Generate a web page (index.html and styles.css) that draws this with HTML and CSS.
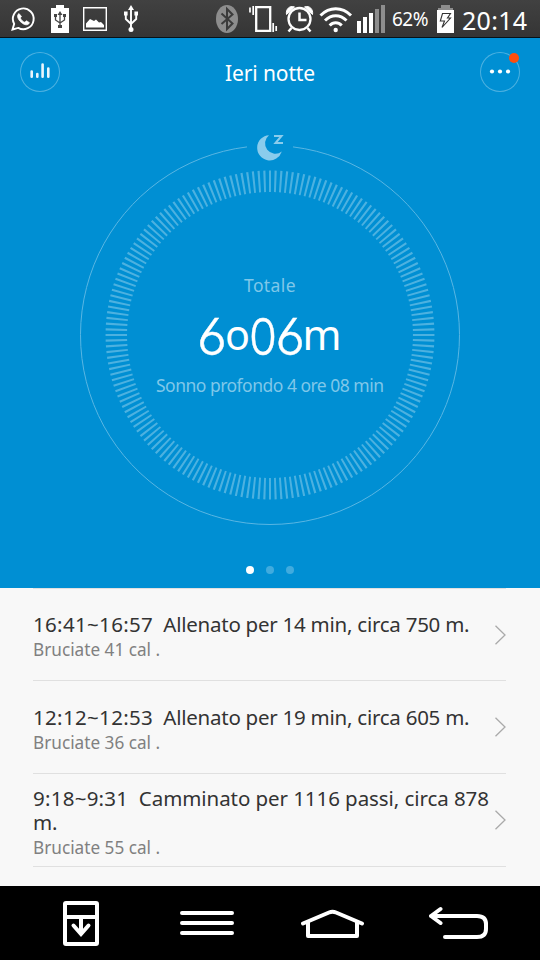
FILE: index.html
```html
<!DOCTYPE html>
<html lang="it">
<head>
<meta charset="utf-8">
<title>Ieri notte</title>
<link rel="stylesheet" href="styles.css">
</head>
<body>
<div class="screen">
  <div class="status">
    <svg class="status-icons" width="160" height="38" viewBox="0 0 160 38" fill="none" stroke="#fff">
      <path d="M12.500 29.500l1.700-5.600a10.400 10.400 0 1 1 4 4z" stroke-width="1.900"/>
      <path d="M19 13.500c-3 2-1 6 2 8.700s7 4 8.500.5l-3.100-2-1.500 1.600c-2-.7-3.700-2.400-4.600-4.400l1.200-1.400z" fill="#fff" stroke="#fff" stroke-width=".7"/>
      <path d="M56 5h8v3h5v25H51V8h5z" fill="#fff" stroke="none"/>
      <path d="M60 15v12M55.500 16v4l4.500 3 4.500-3v-4" stroke="#444" stroke-width="1.300"/>
      <path d="M60 11l2.500 4h-5z M58 25h4v3h-4z M54 14h3v3h-3z M63 14h3v3h-3z" fill="#444" stroke="none"/>
      <path d="M83.700 7.700h22.600v22.600H83.700z" stroke-width="1.400"/>
      <path d="M86 27.500v-4l4-4.500 4 2 2-1.500 3 3 2-.5 3 3v2.500z" fill="#fff" stroke="none"/>
      <path d="M131 9v20M125.800 14v5l5.200 5 5.200-5v-5" stroke-width="1.900"/>
      <path d="M131 5l3 5h-6z M124 11.500h3.600v4H124z M134.400 11.500h3.600v4h-3.600z" fill="#fff" stroke="none"/>
      <circle cx="131" cy="29.500" r="2.500" fill="#fff" stroke="none"/>
    </svg>
    <div class="status-right">
      <svg class="status-icons" width="174" height="38" viewBox="212 0 174 38" fill="none" stroke="#fff">
        <ellipse cx="227" cy="19" rx="11" ry="14" fill="#8d8d8d" stroke="none"/>
        <path d="M221.500 13.500l11 10-5.500 5.500V9l5.500 5.500-11 9.500" stroke="#3b3b3b" stroke-width="2"/>
        <path d="M256.200 7.200h14v23.600h-14z" stroke-width="2.300"/>
        <path d="M253.200 6v9M250 7.500v5M273.200 23v9M276.200 26v5" stroke-width="1.700"/>
        <circle cx="299.500" cy="19" r="11" stroke-width="2.300"/>
        <path d="M299.500 12.500V20h7M291.500 28l-3 3.500M307.500 28l3 3.500" stroke-width="2.500"/>
        <path d="M286.500 14.500c-1-5 3-9.500 8-7.500z M312.500 14.500c1-5-3-9.500-8-7.500z" fill="#fff" stroke="#fff" stroke-width="1"/>
        <path d="M320.500 15.500c9-9 21.500-9 30.500 0M325 20.500c6.500-6.500 15-6.500 21.500 0M329.700 25.500c3.500-3.800 8.500-3.800 12 0" stroke-width="3"/>
        <circle cx="335.700" cy="30" r="2.200" fill="#fff" stroke="none"/>
        <path d="M357 21h4v12h-4z M363 17h4v16h-4z M369 13h4v20h-4z" fill="#fff" stroke="none"/>
        <path d="M375 9h4v24h-4z M381 5h4v28h-4z" fill="#8d8d8d" stroke="none"/>
      </svg>
      <span class="percent">62%</span>
      <svg class="battery" width="17" height="28" viewBox="0 0 17 28">
        <path d="M4 0h9v3h3v2H1V3h3z" fill="#8d8d8d"/>
        <path d="M0 5h17v23H0z" fill="#fff"/>
        <path d="M5.500 8.500h8l-3 4.500h3L5 22.500l2.500-6.500H3.300z" fill="none" stroke="#333" stroke-width="1.100"/>
      </svg>
      <span class="clock">20:14</span>
    </div>
  </div>

  <div class="hero">
    <div class="appbar">
      <div class="round">
        <svg width="40" height="40" viewBox="0 0 40 40" stroke="#e9f5fc" stroke-width="2.600" stroke-linecap="round"><path d="M11.700 19.500v5.300M17.300 22v2.800M22.600 12.500v12.300M28.300 16.500v8.300"/></svg>
      </div>
      <h1 class="title">Ieri notte</h1>
      <div class="round">
        <svg width="40" height="40" viewBox="0 0 40 40" fill="#fff"><circle cx="12" cy="19.500" r="2.100"/><circle cx="20" cy="19.500" r="2.100"/><circle cx="28" cy="19.500" r="2.100"/></svg>
        <span class="badge"></span>
      </div>
    </div>
    <div class="dial">
      <svg width="400" height="404" viewBox="70 126 400 404">
        <path class="orbit" d="M293 146.900A189.500 189.500 0 1 1 247 146.900"/>
        <circle class="ticks" cx="270" cy="335" r="153.700" pathLength="360"/>
        <path class="moon" d="M269 135.200a9.800 9.800 0 1 0 12.800 16.300A12.600 12.600 0 1 1 269 135.200z"/>
        <path class="zed" d="M274 136h7.500l-6 7h7.500"/>
        <text class="soft" x="244" y="292" textLength="51.500">Totale</text>
        <text class="digit" x="197" y="354.500" textLength="30" lengthAdjust="spacingAndGlyphs">6</text>
        <text class="unit" x="225" y="350" textLength="25" lengthAdjust="spacingAndGlyphs">o</text>
        <text class="digit" x="249" y="354.500" textLength="28" lengthAdjust="spacingAndGlyphs">0</text>
        <text class="digit" x="275.500" y="354.500" textLength="29.500" lengthAdjust="spacingAndGlyphs">6</text>
        <text class="unit" x="302.500" y="350" textLength="39" lengthAdjust="spacingAndGlyphs">m</text>
        <text class="soft" x="156" y="392" textLength="228">Sonno profondo 4 ore 08 min</text>
      </svg>
    </div>
    <div class="pager"><i class="dot on"></i><i class="dot"></i><i class="dot"></i></div>
  </div>

  <div class="list">
    <div class="row">
      <div class="copy"><div class="main"><span class="time">16:41~16:57</span><span class="what">  Allenato per 14 min, circa 750 m.</span></div><div class="sub">Bruciate 41 cal .</div></div>
      <svg class="chevron" width="12" height="20" viewBox="0 0 12 20"><path d="M1.500 .7L11 10 1.500 19.300"/></svg>
    </div>
    <div class="row">
      <div class="copy"><div class="main"><span class="time">12:12~12:53</span><span class="what">  Allenato per 19 min, circa 605 m.</span></div><div class="sub">Bruciate 36 cal .</div></div>
      <svg class="chevron" width="12" height="20" viewBox="0 0 12 20"><path d="M1.500 .7L11 10 1.500 19.300"/></svg>
    </div>
    <div class="row">
      <div class="copy"><div class="main"><span class="time short">9:18~9:31</span><span class="what wide">  Camminato per 1116 passi, circa 878<br>m.</span></div><div class="sub">Bruciate 55 cal .</div></div>
      <svg class="chevron" width="12" height="20" viewBox="0 0 12 20"><path d="M1.500 .7L11 10 1.500 19.300"/></svg>
    </div>
  </div>

  <div class="nav">
    <svg width="38" height="47" viewBox="62 899 38 47" fill="none" stroke="#fff" stroke-width="4"><rect x="65" y="902" width="32" height="41" rx="1"/><path d="M65 916h32M81 916v16"/><path d="M73.500 924.500l7.500 8.500 7.500-8.500" stroke-linecap="round"/></svg>
    <svg class="menu" width="54" height="26" viewBox="0 0 54 26" stroke="#fff" stroke-width="4" stroke-linecap="round"><path d="M2 3h50M2 13h50M2 23h50"/></svg>
    <svg class="home" width="64" height="30" viewBox="301 908 64 30" fill="none" stroke="#fff" stroke-width="4" stroke-linecap="round" stroke-linejoin="round"><path d="M303 923.500L329 912.500q3.500-1.500 7 0L362 923.500M308 923v13h49v-13"/></svg>
    <svg class="back" width="60" height="34" viewBox="429 906 60 34" fill="none" stroke="#fff" stroke-width="4" stroke-linecap="round" stroke-linejoin="round"><path d="M440.500 909L431 916l9.500 7M431 916h46q9 0 9 8v5q0 8-9 8h-32"/></svg>
  </div>
</div>
</body>
</html>
```
FILE: styles.css
```css
* { box-sizing: border-box; }
body { margin: 0; font-family: "Noto Sans", sans-serif; }
.screen { width: 540px; height: 960px; display: flex; flex-direction: column; overflow: hidden; }
svg { display: block; flex: none; }

.status { height: 38px; flex: none; display: flex; justify-content: space-between; background: linear-gradient(#414141, #353535); border-bottom: 1px solid #06121a; color: #fff; }
.status-right { display: flex; width: 328px; height: 38px; }
.percent { width: 51px; padding-left: 6px; font-size: 19px; line-height: 39px; letter-spacing: -0.5px; }
.battery { margin-top: 5px; }
.clock { padding-left: 8px; font-size: 25px; line-height: 40px; letter-spacing: 0.3px; white-space: nowrap; }

.hero { height: 550px; flex: none; background: #008fd3; display: flex; flex-direction: column; }
.appbar { display: flex; justify-content: space-between; align-items: flex-start; padding: 14px 20px 0; height: 88px; }
.round { position: relative; width: 40px; height: 40px; border-radius: 50%; box-shadow: inset 0 0 0 1px #4cb1e0; }
.badge { position: absolute; left: 29px; top: 1px; width: 10px; height: 10px; border-radius: 50%; background: #ff4e0d; }
.title { margin: 0; font-size: 21px; font-weight: 400; line-height: 43px; letter-spacing: -0.1px; color: #fff; }
.dial { display: flex; justify-content: center; }
.orbit { fill: none; stroke: #59b6e3; stroke-width: 1; }
.ticks { fill: none; stroke: #4cb1e0; stroke-width: 21.500; stroke-dasharray: 0.76 1.24; stroke-dashoffset: 0.38; }
.moon { fill: #8accec; }
.zed { fill: none; stroke: #8accec; stroke-width: 2; }
.soft { font-size: 17.500px; fill: #7fc7e9; }
.digit { font-family: Inter, sans-serif; font-weight: 300; font-size: 51px; font-feature-settings: "ss01"; fill: #fff; stroke: #fff; stroke-width: 0.4; }
.unit { font-size: 41px; fill: #fff; }
.pager { display: flex; justify-content: center; gap: 12px; padding: 36px 1px 0 0; }
.dot { width: 8px; height: 8px; border-radius: 50%; background: #40abde; }
.dot.on { background: #fff; }

.list { height: 298px; flex: none; background: #f8f8f8; padding: 0 34px 0 33px; }
.row { display: flex; align-items: center; justify-content: space-between; height: 93px; border-bottom: 1px solid #e0e0e0; }
.row:first-child { border-top: 1px solid #e0e0e0; }
.copy { width: 460px; padding-top: 7px; }
.main { font-size: 20.500px; line-height: 24px; color: #333; white-space: pre; }
.time { letter-spacing: 0.33px; }
.time.short { letter-spacing: 0.25px; }
.what { letter-spacing: -0.25px; }
.what.wide { letter-spacing: -0.07px; }
.sub { font-size: 17.200px; line-height: 28px; color: #808080; }
.chevron path { fill: none; stroke: #aaa; stroke-width: 1.300; }

.nav { height: 74px; background: #000; display: flex; align-items: center; padding-left: 62px; }
.menu { margin-left: 80px; }
.home { margin-left: 67px; }
.back { margin-left: 64px; }
```
